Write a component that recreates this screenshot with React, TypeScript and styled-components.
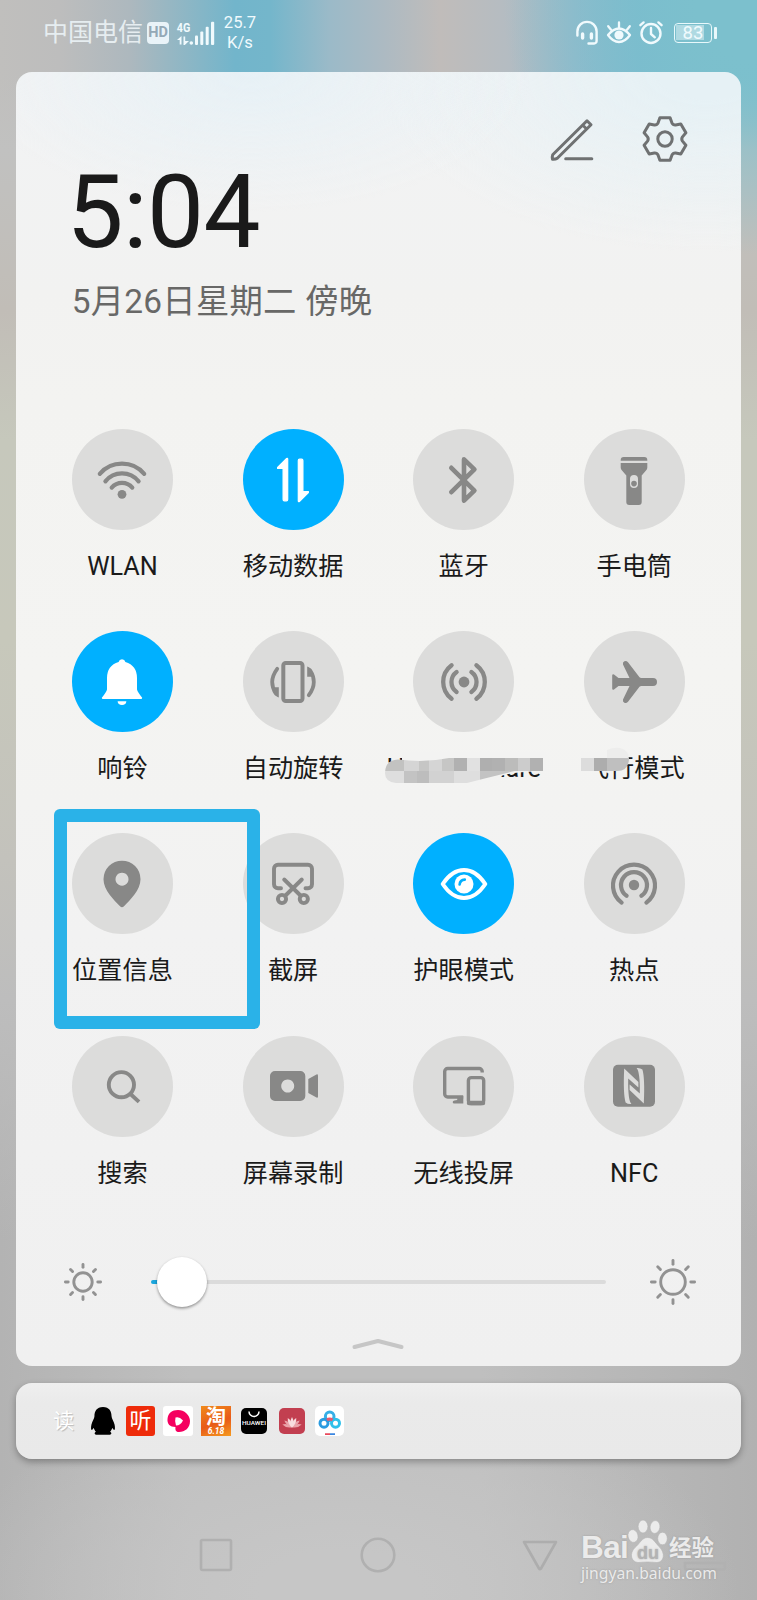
import React from "react";
import styled, { createGlobalStyle } from "styled-components";

const GlobalStyle = createGlobalStyle`
  * { box-sizing: border-box; }
  body { margin: 0; }
`;

const GREY = "#888887";

const Screen = styled.div`
  position: relative;
  width: 757px;
  height: 1600px;
  overflow: hidden;
  display: flex;
  flex-direction: column;
  font-family: Roboto, "Noto Sans CJK SC", sans-serif;
  color: #1a1a1a;
  background:
    radial-gradient(ellipse 300px 300px at 757px 0, rgba(124, 192, 205, 1) 20%, rgba(124, 192, 205, 0) 85%),
    linear-gradient(180deg, rgba(192, 192, 192, 0) 75px, #c1c1c0 150px, #c1bdb7 310px, #c6c8bc 440px, #c7c8bb 640px, #c3c2bc 860px, #bdbdbd 1000px, rgba(182, 182, 182, 0) 1240px),
    radial-gradient(ellipse 400px 200px at 340px 1590px, #c6c6c6 20%, rgba(198, 198, 198, 0) 100%),
    linear-gradient(90deg, #c0bfbd 0, #bdbdbd 60px, #adb8be 130px, #72b5cb 235px, #74b6cb 270px, #9bbac8 330px, #adbac2 385px, #c0bcba 440px, #b4bcc2 510px, #94bacb 575px, #7ab8ce 640px, #7cbecb 757px) 0 0 / 757px 160px no-repeat,
    linear-gradient(90deg, #b3b3b3 0, #bfbfbf 190px, #bfbfbf 480px, #b1b1b1 757px);
`;

const StatusBar = styled.header`
  height: 71.6px;
  padding: 0 40px 6px 43px;
  display: flex;
  align-items: center;
  justify-content: space-between;
  color: #f0fafd;
`;

const StatusGroup = styled.div<{ $gap?: number }>`
  display: flex;
  align-items: center;
  gap: ${(p) => p.$gap ?? 0}px;
`;

const Carrier = styled.span`
  font-size: 25px;
  line-height: 30px;
  color: #e6edf0;
`;

const HdBadge = styled.span`
  width: 22px;
  height: 22px;
  margin-left: 4px;
  border-radius: 4px;
  background: #e9f3f8;
  color: #94a9b6;
  font-size: 14.5px;
  font-weight: 700;
  line-height: 22px;
  text-align: center;
`;

const Speed = styled.span`
  margin-left: 8px;
  width: 34px;
  font-size: 16.6px;
  line-height: 20px;
  text-align: center;
`;

const Battery = styled.span`
  position: relative;
  width: 38px;
  height: 20px;
  margin: 0 5px 0 4.5px;
  border: 1.4px solid #e8f8fb;
  border-radius: 4px;
  font-size: 18.5px;
  line-height: 18px;
  text-align: center;
  background: linear-gradient(90deg, rgba(226, 243, 247, 0.5) 83%, transparent 83%) 1px 1px / 34px 15px no-repeat;

  &::after {
    content: "";
    position: absolute;
    right: -6px;
    top: 3px;
    width: 3px;
    height: 12px;
    border-radius: 1px;
    background: #e8f8fb;
  }
`;

const Panel = styled.main`
  height: 1294.4px;
  margin: 0 16.3px;
  border-radius: 16px;
  display: flex;
  flex-direction: column;
  background:
    radial-gradient(ellipse 280px 140px at 235px 0, rgba(231, 241, 246, 1), rgba(236, 243, 246, 0)),
    radial-gradient(ellipse 330px 180px at 690px 0, rgba(230, 241, 245, 1) 15%, rgba(236, 243, 246, 0)),
    linear-gradient(180deg, #f2f3f4 0, #f2f2f1 220px, #f3f3f1 330px, #f4f4f2 600px, #f2f2f2 860px, #f0f0f0 1294px);
`;

const Header = styled.section`
  height: 357.6px;
  padding: 42px 50.5px 0 53.5px;
`;

const Actions = styled.div`
  display: flex;
  justify-content: flex-end;
  gap: 43px;
  height: 50px;
  color: #6f7172;
`;

const Time = styled.div`
  margin: -1px 0 0 -3.2px;
  font-size: 101.5px;
  line-height: 100px;
  letter-spacing: -0.6px;
`;

const DateLine = styled.div`
  margin: 14.6px 0 0 2px;
  font-size: 33.4px;
  line-height: 50px;
  letter-spacing: 0.2px;
  color: #686867;
`;

const Tiles = styled.section`
  display: grid;
  grid-template-columns: repeat(4, 170.6px);
  grid-auto-rows: 202.15px;
  margin-left: 20.9px;
`;

const Tile = styled.div`
  position: relative;
  display: flex;
  flex-direction: column;
  align-items: center;
`;

const Disc = styled.div<{ $on?: boolean }>`
  width: 101px;
  height: 101px;
  border-radius: 50%;
  display: flex;
  align-items: center;
  justify-content: center;
  color: ${(p) => (p.$on ? "#ffffff" : GREY)};
  background: ${(p) => (p.$on ? "#00b0ff" : "#dcdcdb")};
`;

const Label = styled.div`
  margin-top: 19px;
  font-size: 25.2px;
  line-height: 36px;
  white-space: nowrap;
`;

const Smudge = styled.svg`
  position: absolute;
  top: 108.9px;
  left: 1.6px;
`;

const Highlight = styled.div`
  position: absolute;
  left: 54px;
  top: 809px;
  width: 206px;
  height: 220px;
  border-radius: 6px;
  background: linear-gradient(#2ab2e8, #2ab2e8) 0 0 / 100% 13px no-repeat,
    linear-gradient(#2ab2e8, #2ab2e8) 0 100% / 100% 13px no-repeat,
    linear-gradient(#2ab2e8, #2ab2e8) 0 0 / 13px 100% no-repeat,
    linear-gradient(#2ab2e8, #2ab2e8) 100% 0 / 13px 100% no-repeat;
`;

const Brightness = styled.section`
  display: flex;
  align-items: center;
  height: 52px;
  margin-top: 17.8px;
  padding-left: 42.2px;
  color: #929292;
`;

const Track = styled.div`
  width: 455px;
  height: 4px;
  margin: 0 42.2px 0 42.5px;
  border-radius: 2px;
  display: flex;
  align-items: center;
  background: linear-gradient(90deg, #1ca6dd 10px, #dbdbdb 10px);
`;

const Thumb = styled.div`
  width: 50px;
  height: 50px;
  margin-left: 6px;
  flex: none;
  border-radius: 50%;
  background: #fff;
  box-shadow: 0 1.5px 3px rgba(0, 0, 0, 0.4);
`;

const Handle = styled.svg`
  display: block;
  margin: 27px auto 0;
  position: relative;
  left: -0.5px;
`;

const AppsCard = styled.section`
  height: 76px;
  flex: none;
  margin: 17px 16.3px 0;
  padding-left: 35.4px;
  border-radius: 16px;
  display: flex;
  align-items: center;
  background: linear-gradient(180deg, #efefef, #eaeaea 20px, #e9e9e9);
  box-shadow: 0 3px 7px rgba(0, 0, 0, 0.3);
`;

const AppIcon = styled.div<{ $bg?: string; $size?: number; $radius?: number; $ml?: number }>`
  width: ${(p) => p.$size ?? 29.5}px;
  height: ${(p) => p.$size ?? 29.5}px;
  margin-left: ${(p) => p.$ml ?? 8.3}px;
  border-radius: ${(p) => p.$radius ?? 3}px;
  background: ${(p) => p.$bg ?? "transparent"};
  display: flex;
  flex-direction: column;
  align-items: center;
  justify-content: center;
  overflow: hidden;
  color: #fff;
`;

const AppGlyph = styled.span<{ $size: number; $lh?: number; $weight?: number; $shadow?: boolean; $italic?: boolean }>`
  font-size: ${(p) => p.$size}px;
  line-height: ${(p) => p.$lh ?? p.$size}px;
  font-weight: ${(p) => p.$weight ?? 400};
  font-style: ${(p) => (p.$italic ? "italic" : "normal")};
  white-space: nowrap;
  text-shadow: ${(p) => (p.$shadow ? "1px 1px 1px rgba(0,0,0,.2)" : "none")};
`;

const NavBar = styled.nav`
  flex: 1;
  display: flex;
  align-items: center;
  padding: 51px 0 0 198.4px;
  gap: 125.6px;
`;

const Watermark = styled.div`
  position: absolute;
  left: 581px;
  top: 1516px;
  width: 146px;
  color: #ebebeb;
  text-shadow: 0 0 2px rgba(130, 130, 130, 0.6);
`;

const Brand = styled.div`
  display: flex;
  align-items: flex-end;
  height: 47px;
  font-family: "Liberation Sans", "Noto Sans CJK SC", sans-serif;
  font-weight: 700;
`;

const BrandLatin = styled.span`
  width: 45px;
  font-size: 31.5px;
  line-height: 31px;
  letter-spacing: -0.6px;
`;

const BrandHan = styled.span`
  font-size: 22.5px;
  line-height: 29px;
  margin-left: 1px;
  white-space: nowrap;
`;

const Site = styled.div`
  font-family: "Noto Sans", sans-serif;
  font-size: 15.7px;
  line-height: 20px;
  white-space: nowrap;
`;

type GlyphProps = { children: React.ReactNode; size?: number; w?: number };

// Line icon drawn around its own centre.
const Glyph = ({ children, size = 54, w = 4 }: GlyphProps) => (
  <svg
    width={size}
    height={size}
    viewBox={`${-size / 2} ${-size / 2} ${size} ${size}`}
    fill="none"
    stroke="currentColor"
    strokeWidth={w}
    strokeLinecap="round"
    strokeLinejoin="round"
  >
    {children}
  </svg>
);

const solid = { fill: "currentColor", stroke: "none" };

const WlanIcon = () => (
  <Glyph w={4.2}>
    <path d="M-22.2 -6.2A29.3 29.3 0 0 1 22.2 -6.2M-16.6 1.4A21.3 21.3 0 0 1 16.6 1.4M-10.3 7.6A13.5 13.5 0 0 1 10.3 7.6" />
    <circle cy="14.3" r="4.4" {...solid} />
  </Glyph>
);

const DataIcon = () => (
  <Glyph w={1.2}>
    <path fill="currentColor" d="M-5.3 -21V19.5a1.3 1.3 0 0 1 -1.3 1.3h-2a1.3 1.3 0 0 1 -1.3 -1.3V-11.6H-15.4V-12.6L-6.6 -21.4Q-5.3 -22 -5.3 -21z" />
    <path fill="currentColor" d="M5.3 21V-19.5a1.3 1.3 0 0 1 1.3 -1.3h2a1.3 1.3 0 0 1 1.3 1.3V11.6H15.4V12.6L6.6 21.4Q5.3 22 5.3 21z" />
  </Glyph>
);

const BluetoothIcon = () => (
  <Glyph w={4.6}>
    <path d="M-12.7 -12.2L10.4 10.7L0 20.6V-20.6L10.4 -10.7L-12.7 12.2" />
  </Glyph>
);

const TorchIcon = () => (
  <Glyph>
    <g {...solid}>
      <path d="M-13.3 -19.2V-20a3 3 0 0 1 3-3H10.3a3 3 0 0 1 3 3v.8z" />
      <path fillRule="evenodd" d="M-13.3 -17H13.3V-12.5Q13.3 -11 12.2 -9.8L7.7 -4.6V22a3 3 0 0 1 -3 3H-4.7a3 3 0 0 1 -3 -3V-4.6L-12.2 -9.8Q-13.3 -11 -13.3 -12.5zM0 -5a4 4 0 0 0 -4 4V4a4 4 0 0 0 8 0V-1a4 4 0 0 0 -4 -4z" />
      <circle cy="3.6" r="2.8" />
    </g>
  </Glyph>
);

const BellIcon = () => (
  <Glyph>
    <g {...solid}>
      <path d="M-3.4 -20a3.5 3.5 0 0 1 6.8 0Q15 -16.5 15 -4V7.5Q15.5 10 20.2 15.8Q20.3 17 19 17H-19Q-20.3 17 -20.2 15.8Q-15.5 10 -15 7.5V-4Q-15 -16.5 -3.4 -20z" />
      <path d="M-4.4 19.2H4.4Q4 23 0 23T-4.4 19.2z" />
    </g>
  </Glyph>
);

const RotateIcon = () => (
  <Glyph>
    <rect x="-9.7" y="-19" width="19.2" height="38" rx="2.5" />
    <path strokeWidth="3.8" d="M-15.8 -13.2Q-20.8 -6.5 -20.8 0Q-20.8 6 -17.2 11.5" />
    <path {...solid} d="M-20 5.3L-14.2 5.3V15.6Q-16 15.2 -17.5 13.5z" />
    <path strokeWidth="3.8" d="M15.8 13.2Q20.8 6.5 20.8 0Q20.8 -6 17.2 -11.5" />
    <path {...solid} d="M20 -5.3L14.2 -5.3V-15.6Q16 -15.2 17.5 -13.5z" />
  </Glyph>
);

const ShareIcon = () => (
  <Glyph w={4.3}>
    <circle r="5.4" {...solid} />
    <path d="M-7.4 -10A12.3 12.3 0 0 0 -7.4 10M7.4 -10A12.3 12.3 0 0 1 7.4 10M-12.4 -16.8A21 21 0 0 0 -12.4 16.8M12.4 -16.8A21 21 0 0 1 12.4 16.8" />
  </Glyph>
);

const PlaneIcon = () => (
  <Glyph>
    <path
      {...solid}
      d="M-21.8 -6.8Q-21.5 -8.5 -20 -7.5L-15.5 -4H-4.5L-11 -17.6Q-11.6 -19.8 -9.6 -20.8Q-7.6 -21.5 -6 -19.8L5.5 -4.7L7 -4H19a4 4 0 0 1 0 8H7L5.5 4.7L-6 19.8Q-7.6 21.5 -9.6 20.8Q-11.6 19.8 -11 17.6L-4.5 4H-15.5L-20 7.5Q-21.5 8.5 -21.8 6.8z"
    />
  </Glyph>
);

const PinIcon = () => (
  <Glyph>
    <path
      {...solid}
      fillRule="evenodd"
      d="M0 -23.3A18.5 18.5 0 0 1 18.5 -4.8C18.5 6 8 16 2 22.3Q0 24 -2 22.3C-8 16 -18.5 6 -18.5 -4.8A18.5 18.5 0 0 1 0 -23.3zM0 -11.3a6.5 6.5 0 1 0 .01 0z"
    />
  </Glyph>
);

const SnipIcon = () => (
  <Glyph w={3.9}>
    <path d="M-12 4.2H-15a4 4 0 0 1 -4 -4V-15.3a4 4 0 0 1 4 -4H15a4 4 0 0 1 4 4V.2a4 4 0 0 1 -4 4H12.5" />
    <path d="M-8.8 -4.5L8 12M8.8 -4.5L-8 12" />
    <circle cx="-11" cy="15" r="4.1" />
    <circle cx="10.8" cy="15" r="4.1" />
  </Glyph>
);

const EyeIcon = () => (
  <Glyph w={4}>
    <path d="M-21.3 0Q-12 -14 0 -14T21.3 0Q12 14 0 14T-21.3 0z" />
    <circle r="9.5" {...solid} />
    <path stroke="#00b0ff" strokeWidth="2.6" d="M-4.4 .5Q-4 -4 .8 -4.4" />
  </Glyph>
);

const HotspotIcon = () => (
  <Glyph w={4.2}>
    <circle cy="1" r="5.2" {...solid} />
    <path d="M-7.4 11.8A13 13 0 1 1 7.4 11.8M-12.4 18.6A21 21 0 1 1 12.4 18.6" />
  </Glyph>
);

const SearchIcon = () => (
  <Glyph w={3.9}>
    <circle cx="-.6" cy="-1.3" r="12.6" />
    <path strokeLinecap="butt" d="M8.2 7.8L17 15.9" />
  </Glyph>
);

const RecordIcon = () => (
  <Glyph>
    <g {...solid}>
      <path fillRule="evenodd" d="M-18 -15H7.3a5 5 0 0 1 5 5V10a5 5 0 0 1 -5 5H-18a5 5 0 0 1 -5 -5V-10a5 5 0 0 1 5 -5zM-5.3 -6.5a6.5 6.5 0 1 0 .01 0z" />
      <path d="M15.3 -7L23.5 -11.6Q25 -12 25 -10.5V10.5Q25 12 23.5 11.6L15.3 7z" />
    </g>
  </Glyph>
);

const CastIcon = () => (
  <Glyph w={3.4}>
    <path strokeLinecap="butt" d="M18.2 -13.4V-14.5a3 3 0 0 0 -3 -3H-16.3a3 3 0 0 0 -3 3V8a3 3 0 0 0 3 3H-.8" />
    <path {...solid} d="M-6.5 10H-.7V17.6H-9.5Q-11.5 17.6 -11.3 16Q-11.2 15 -9.6 14.6L-6.8 14z" />
    <rect x="4.4" y="-8.4" width="15.3" height="26" rx="3" />
    <path d="M5 17H19" strokeWidth="4.5" />
  </Glyph>
);

const NfcIcon = () => (
  <Glyph>
    <rect x="-21" y="-21.2" width="42" height="42" rx="5" {...solid} />
    <g fill="#dcdcdb" stroke="none">
      <path d="M-9.8 -17.5L4.4 -4V1.6L-5.8 -7.6Q-6.2 14 -2.6 18Q-6 18.4 -8.4 16.5Q-11 8 -9.8 -17.5z" />
      <path d="M9.8 17.5L-4.4 4V-1.6L5.8 7.6Q6.2 -14 2.6 -18Q6 -18.4 8.4 -16.5Q11 -8 9.8 17.5z" />
    </g>
  </Glyph>
);

const PencilIcon = () => (
  <Glyph size={50} w={3}>
    <path d="M-19.3 15.8L15 -18.2L19 -14.2L-14.7 19.2Q-16.5 20.4 -19.5 20.2Q-20 17.5 -19.3 15.8zM10.6 -14L14.6 -10" />
    <path d="M-6.3 19.8H19.8" />
  </Glyph>
);

// Six identical teeth, one every 60 degrees.
const gearPath = (() => {
  const rot = (x: number, y: number, k: number) => {
    const a = (k * Math.PI) / 3;
    return `${(x * Math.cos(a) - y * Math.sin(a)).toFixed(2)} ${(x * Math.sin(a) + y * Math.cos(a)).toFixed(2)}`;
  };
  let d = "";
  for (let k = 0; k < 6; k++) {
    d += `${k ? "L" : "M"}${rot(-5.1, -21.2, k)}L${rot(5.1, -21.2, k)}L${rot(6.9, -16.2, k)}Q${rot(8, -13.9, k)} ${rot(-6.9, -16.2, k + 1)}`;
  }
  return d + "z";
})();

const GearIcon = () => (
  <Glyph size={50} w={3}>
    <path d={gearPath} />
    <circle r="7.2" />
  </Glyph>
);

const Sun = ({ ring, from, to, w }: { ring: number; from: number; to: number; w: number }) => (
  <Glyph size={50} w={w}>
    <circle r={ring} />
    {[0, 45, 90, 135, 180, 225, 270, 315].map((a) => (
      <path key={a} transform={`rotate(${a})`} d={`M0 ${-from}V${-to}`} />
    ))}
  </Glyph>
);

const SignalSvg = styled.svg`
  margin-left: 7px;
`;

const SignalIcon = () => (
  <SignalSvg width="39" height="34" viewBox="176 14 39 34" fill="#f0fafd">
    <text x="176.8" y="30" fontSize="13" fontWeight="700" textLength="13.5" lengthAdjust="spacingAndGlyphs">4G</text>
    <path d="M177 38L181.5 34V42.5H179.7V38zM183.5 34.5H185.2V39H189L184.8 43H183.5z" />
    <circle cx="191.3" cy="41" r="1.8" />
    <rect x="195" y="33.5" width="3" height="9.5" rx="1" />
    <rect x="200.3" y="29.5" width="3" height="13.5" rx="1" />
    <rect x="205.7" y="24.8" width="3" height="18.2" rx="1" />
    <rect x="211" y="19.8" width="3.2" height="23.2" rx="1" />
  </SignalSvg>
);

const HeadsetIcon = () => (
  <Glyph size={26} w={2.4}>
    <path d="M-9.6 2.5V-1.5A9.6 9.6 0 0 1 9.6 -1.5V8a2.5 2.5 0 0 1 -2.5 2.5H1.5" />
    <path d="M-4.4 1V5M4.4 1V5" strokeWidth="3.4" />
  </Glyph>
);

const EyeCareIcon = () => (
  <Glyph size={26} w={2.3}>
    <path d="M-11 2Q-5.5 -4.5 0 -4.5T11 2Q6 9 0 9T-11 2zM0 -5V-10.5M-8 -3.3L-10.8 -6.8M8 -3.3L10.8 -6.8" />
    <circle cy="2" r="4.6" {...solid} />
  </Glyph>
);

const AlarmIcon = () => (
  <Glyph size={26} w={2.4}>
    <circle cy=".5" r="9.5" />
    <path d="M0 -5V1L3.8 4.3M-10.6 -7.8L-7.4 -10.6M10.6 -7.8L7.4 -10.6" />
  </Glyph>
);

const ShareSmudge = () => (
  <Smudge width="172" height="50" viewBox="380 740 172 50">
    <path fill="#f3f3f2" d="M402 752H546V771.5H541Q520 771 504 775Q480 784 466 784H384V763L402 761z" />
    <clipPath id="stroke-share">
      <path d="M385 773Q385 760 398 759.5Q425 763 449 758H543V771H515Q490 777 467 783H396Q385 782 385 773z" />
    </clipPath>
    <g clipPath="url(#stroke-share)">
      <path fill="#c2c2c1" d="M380 758h24v13h-24z" />
      <path fill="#d5d5d5" d="M404 758h15v13h-15zM429 758h13v13h-13z" />
      <path fill="#c6c6c5" d="M419 758h10v13h-10zM442 758h12v13h-12z" />
      <path fill="#b1b1b1" d="M454 758h13v13h-13zM492 758h13v13h-13zM530 758h13v13h-13z" />
      <path fill="#e1e1e1" d="M467 758h13v13h-13z" />
      <path fill="#afafaf" d="M480 758h12v13h-12z" />
      <path fill="#bcbcbb" d="M505 758h13v13h-13z" />
      <path fill="#cccccc" d="M518 758h12v13h-12z" />
      <path fill="#dedede" d="M380 771h24v13h-24zM454 771h26v13h-26z" />
      <path fill="#c3c3c3" d="M404 771h13v13h-13zM480 771h35v13h-35z" />
      <path fill="#bdbdbd" d="M417 771h12v13h-12z" />
      <path fill="#d2d2d2" d="M429 771h25v13h-25z" />
    </g>
  </Smudge>
);

const FlightSmudge = () => (
  <Smudge width="90" height="50" viewBox="550 740 90 50">
    <path fill="#f3f3f2" d="M580 752H606V771H580z" />
    <path fill="#ededec" d="M606 750Q612 747 619 748Q629 750 628 762L618 767H606z" />
    <path fill="#dcdcdc" d="M580 758h13v13h-13z" />
    <path fill="#adadad" d="M593 758h13v13h-13z" />
    <path fill="#bfbfbf" d="M606 758H628Q628 771 616 771H606z" />
  </Smudge>
);

const tiles: { label: string; icon: React.ReactNode; on?: boolean; cover?: React.ReactNode }[] = [
  { label: "WLAN", icon: <WlanIcon /> },
  { label: "移动数据", icon: <DataIcon />, on: true },
  { label: "蓝牙", icon: <BluetoothIcon /> },
  { label: "手电筒", icon: <TorchIcon /> },
  { label: "响铃", icon: <BellIcon />, on: true },
  { label: "自动旋转", icon: <RotateIcon /> },
  { label: "Huawei Share", icon: <ShareIcon />, cover: <ShareSmudge /> },
  { label: "飞行模式", icon: <PlaneIcon />, cover: <FlightSmudge /> },
  { label: "位置信息", icon: <PinIcon /> },
  { label: "截屏", icon: <SnipIcon /> },
  { label: "护眼模式", icon: <EyeIcon />, on: true },
  { label: "热点", icon: <HotspotIcon /> },
  { label: "搜索", icon: <SearchIcon /> },
  { label: "屏幕录制", icon: <RecordIcon /> },
  { label: "无线投屏", icon: <CastIcon /> },
  { label: "NFC", icon: <NfcIcon /> },
];

const Penguin = () => (
  <svg width="26" height="30" viewBox="0 0 26 30">
    <path d="M13 1C6.500 1 4.300 5.500 4.300 10.500C4.300 13 2 15.500 1.200 19C.6 22 .7 24.500 1.700 24.300C2.500 24.200 3.300 22.800 3.600 22.200C4 24 4.800 25.200 5.800 26.200C4 27 4 29 6 29.200H20C22 29 22 27 20.200 26.200C21.200 25.200 22 24 22.400 22.200C22.700 22.800 23.500 24.200 24.300 24.300C25.300 24.500 25.400 22 24.800 19C24 15.500 21.700 13 21.700 10.500C21.700 5.500 19.500 1 13 1z" />
  </svg>
);

const PlayBlob = () => (
  <svg width="29" height="29" viewBox="0 0 29 29">
    <path fill="#f5005f" d="M14 4A12 11.500 0 0 1 26 15C26 22 21 26 15 26C12 26 11 24 11.500 21C6 21 3 18 3.500 13C4 7 8 4 14 4z" />
    <path fill="#fff" d="M11.500 11.500Q15 10 19 14.500Q16.500 19.500 12 19.500Q10.500 15 11.500 11.500z" />
  </svg>
);

const Bag = () => (
  <svg width="26" height="26" viewBox="0 0 26 26">
    <path fill="none" stroke="#fff" strokeWidth="1.500" d="M8 3.500a5 5 0 0 0 10 0" />
    <text x="1" y="17" fill="#fff" fontSize="6" fontWeight="500" textLength="24" lengthAdjust="spacingAndGlyphs">HUAWEI</text>
  </svg>
);

const Lotus = () => (
  <svg width="26" height="26" viewBox="0 0 26 26">
    {[-75, -50, 50, 75, -25, 25, 0].map((a) => (
      <path key={a} transform={`rotate(${a} 13 19)`} fill={Math.abs(a) < 30 ? "#f8dcde" : "#eaa3aa"} d="M13 19.500Q10 14 13 9Q16 14 13 19.500z" />
    ))}
  </svg>
);

const Cloud = () => (
  <svg width="29" height="29" viewBox="0 0 29 29" fill="none" strokeWidth="3">
    <circle cx="14.700" cy="10.300" r="4.300" stroke="#36afe6" />
    <circle cx="9" cy="17.200" r="4" stroke="#2a9be0" />
    <circle cx="20.500" cy="17.200" r="4" stroke="#2ec0ea" />
    <path stroke="#e9586f" d="M12 14Q14.700 12 17.500 14" />
    <path stroke="#e94a5c" strokeWidth="2.400" d="M10 28.500H15" />
    <path stroke="#3a86e0" strokeWidth="2.400" d="M15 28.500H20" />
  </svg>
);

const Paw = () => (
  <svg width="42" height="46" viewBox="0 0 42 46" fill="#ebebeb" stroke="#b4b4b4" strokeWidth=".6">
    <ellipse cx="7" cy="19" rx="5" ry="6.500" transform="rotate(-12 7 19)" />
    <ellipse cx="17" cy="9.500" rx="4.900" ry="6.500" />
    <ellipse cx="29" cy="10" rx="4.900" ry="6.500" transform="rotate(8 29 10)" />
    <ellipse cx="36.500" cy="21.500" rx="4.800" ry="6.300" />
    <path d="M21.500 20.500C27 20.500 29 25.500 33 29.500C40 36.500 38 45 31 45.500Q26 45 21.500 45T12 45.500C5 45 3 36.500 9 30.500C14 26.500 16 20.500 21.500 20.500z" />
    <text x="11" y="42.300" fontFamily="Liberation Sans, sans-serif" fontSize="18" fontWeight="700" fill="#b3b3b3" stroke="none">du</text>
  </svg>
);

export default function App() {
  return (
    <Screen>
      <GlobalStyle />
      <StatusBar>
        <StatusGroup>
          <Carrier>中国电信</Carrier>
          <HdBadge>HD</HdBadge>
          <SignalIcon />
          <Speed>
            25.7
            <br />
            K/s
          </Speed>
        </StatusGroup>
        <StatusGroup $gap={6}>
          <HeadsetIcon />
          <EyeCareIcon />
          <AlarmIcon />
          <Battery>83</Battery>
        </StatusGroup>
      </StatusBar>

      <Panel>
        <Header>
          <Actions>
            <PencilIcon />
            <GearIcon />
          </Actions>
          <Time>5:04</Time>
          <DateLine>5月26日星期二 傍晚</DateLine>
        </Header>

        <Tiles>
          {tiles.map((t) => (
            <Tile key={t.label}>
              <Disc $on={t.on}>{t.icon}</Disc>
              <Label>{t.label}</Label>
              {t.cover}
            </Tile>
          ))}
        </Tiles>

        <Brightness>
          <Sun ring={9.2} from={14.8} to={17.6} w={2.9} />
          <Track>
            <Thumb />
          </Track>
          <Sun ring={12.3} from={17.8} to={21.6} w={2.9} />
        </Brightness>
        <Handle width="54" height="16" viewBox="0 0 54 16" fill="none" stroke="#c6c6c6" strokeWidth="4" strokeLinecap="round" strokeLinejoin="round">
          <path d="M3.500 12L27 6L50.500 12" />
        </Handle>
      </Panel>

      <AppsCard>
        <AppIcon $ml={0} $size={24}>
          <AppGlyph $size={21} $lh={24} $shadow>读</AppGlyph>
        </AppIcon>
        <AppIcon $ml={12.5} $size={29.5}>
          <Penguin />
        </AppIcon>
        <AppIcon $bg="#ee2b0a" $ml={8}>
          <AppGlyph $size={22} $lh={28}>听</AppGlyph>
        </AppIcon>
        <AppIcon $bg="#fff">
          <PlayBlob />
        </AppIcon>
        <AppIcon $bg="linear-gradient(160deg,#f08a1c,#e85a18 55%,#f59a1f)" $radius={0}>
          <AppGlyph $size={20} $lh={20} $weight={700}>淘</AppGlyph>
          <AppGlyph $size={8.5} $lh={8} $weight={700} $italic>6.18</AppGlyph>
        </AppIcon>
        <AppIcon $bg="#000" $size={26.5} $radius={5} $ml={10}>
          <Bag />
        </AppIcon>
        <AppIcon $bg="#c23f50" $size={26.5} $radius={5} $ml={11.5}>
          <Lotus />
        </AppIcon>
        <AppIcon $bg="#fff" $ml={9.5} $radius={5}>
          <Cloud />
        </AppIcon>
      </AppsCard>

      <NavBar>
        <svg width="36" height="36" viewBox="-18 -18 36 36" fill="none" stroke="#b0b0b0" strokeWidth="2.600">
          <rect x="-15" y="-15" width="30" height="30" rx="1.500" />
        </svg>
        <svg width="36" height="36" viewBox="-18 -18 36 36" fill="none" stroke="#b0b0b0" strokeWidth="2.600">
          <circle r="16.300" />
        </svg>
        <svg width="36" height="36" viewBox="-18 -18 36 36" fill="none" stroke="#adadad" strokeWidth="2.600" strokeLinejoin="round">
          <path d="M-16 -13H16L1 13.500Q0 15 -1 13.500z" />
        </svg>
        <svg width="44" height="36" viewBox="-22 -18 44 36" fill="none" stroke="#b1b1b1" strokeWidth="2.600">
          <path d="M-20 8V12.500a2 2 0 0 0 2 2H18a2 2 0 0 0 2 -2V8z" />
        </svg>
      </NavBar>

      <Highlight />
      <Watermark>
        <Brand>
          <BrandLatin>Bai</BrandLatin>
          <Paw />
          <BrandHan>经验</BrandHan>
        </Brand>
        <Site>jingyan.baidu.com</Site>
      </Watermark>
    </Screen>
  );
}
